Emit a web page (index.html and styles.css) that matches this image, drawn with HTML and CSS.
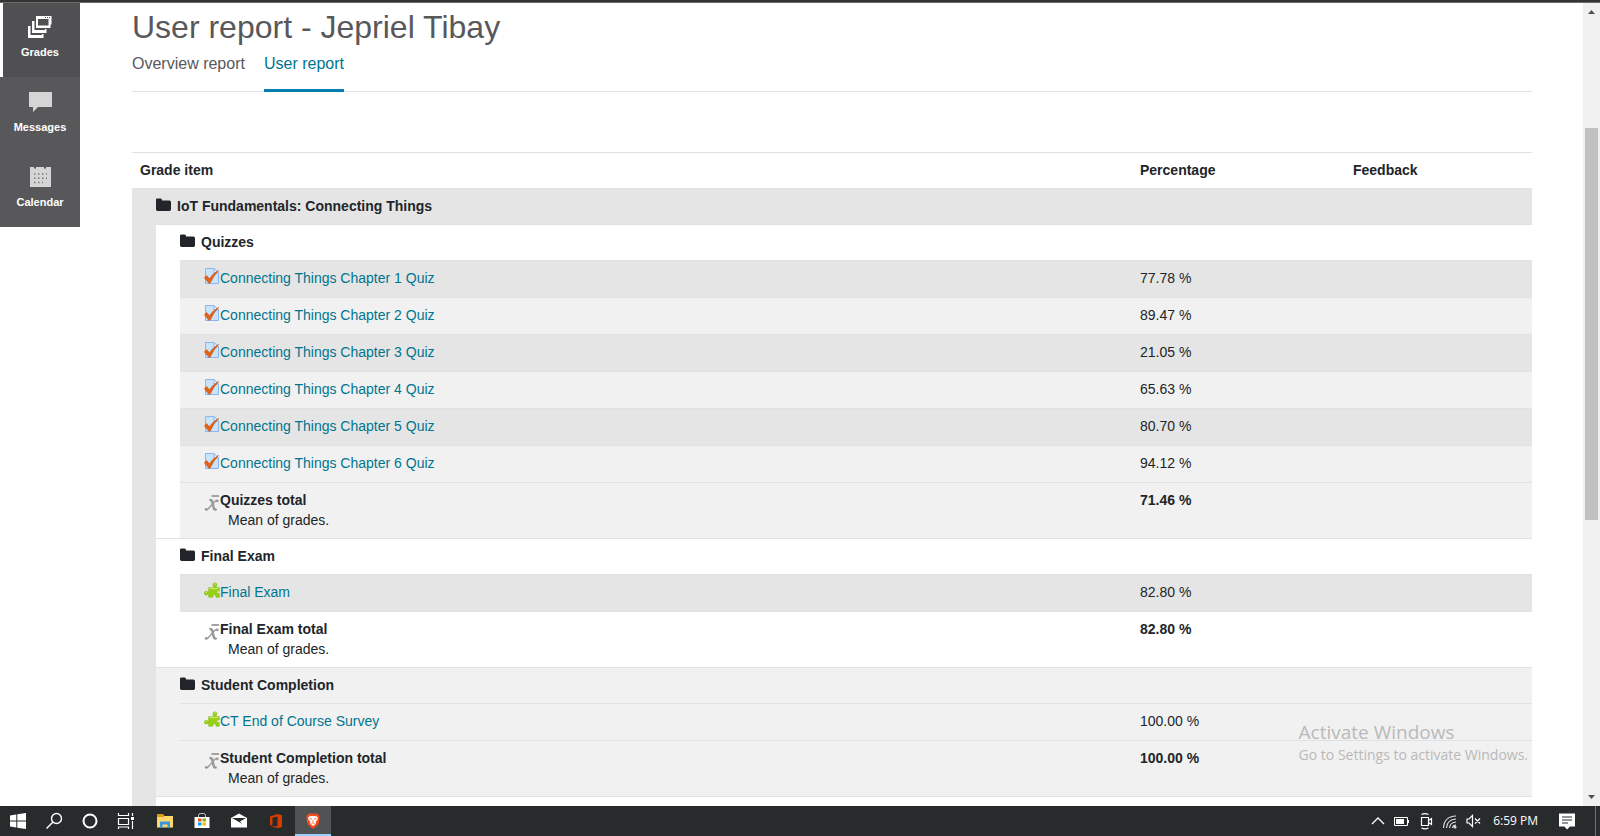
FILE: index.html
```html
<!DOCTYPE html>
<html lang="en">
<head>
<meta charset="utf-8">
<title>User report</title>
<link rel="stylesheet" href="styles.css">
</head>
<body>
<svg class="defs" aria-hidden="true">
  <symbol id="folder" viewBox="0 0 15 14"><path fill="#212529" d="M0 1.6Q0 .5 1.3.5H4.6Q6 .5 6 2V2.4H13.4Q15 2.4 15 3.9V11.6Q15 13 13.4 13H1.5Q0 13 0 11.6Z"/></symbol>
  <symbol id="quiz" viewBox="0 0 16 16"><path fill="#c8e4fb" stroke="#8fb6ec" d="M1.500.5H10L14.500 5V15.500H1.500Z"/><path fill="#f3f9ff" stroke="#8fb6ec" d="M10 .5V5H14.500Z"/><path fill="#e2641c" stroke="#c9500f" stroke-width=".6" d="M.4 9.800 2.600 7.600 5.500 10.700Q9 5 14.600 2.400 9.600 7.500 6 15.300H4.900Z"/></symbol>
  <symbol id="puzzle" viewBox="0 0 17 16"><path fill="#98d012" stroke="#86bb1c" stroke-width=".7" d="M5 5.500H10.200Q10.600 4.400 9.600 3.300 9 .5 11.500.4 14.100.5 13.500 3.300 12.600 4.500 13 5.500H16.200V9Q13.600 8.600 13.400 10.300 13.600 12 16.200 11.600V15.600H12.800Q13 13 11 12.800 9 13 9.400 15.600H5V12.800Q4 12.300 2.900 13.300.4 13.600.3 11.300.5 9 2.900 9.500 4.100 10.300 5 9.800Z"/><path stroke="#d6ef7b" d="M6 6.500H15M10.500 1.600H12.500M1.500 10.500H3"/></symbol>
  <symbol id="mean" viewBox="0 0 16 18"><path fill="none" stroke="#999" stroke-width="1.800" d="M7.500 2H15"/><path fill="none" stroke="#999" stroke-width="2.500" d="M5.500 6.200Q7.900 5.600 8.500 8.500L9.600 13.500Q10.200 16.400 12.600 15"/><path fill="none" stroke="#999" stroke-width="1.300" d="M13.500 7Q12.600 5.600 11 7.200L4.500 14.500Q2.600 16.800 1.400 15"/><circle cx="13.300" cy="6.900" r="1.300" fill="#999"/><circle cx="2.200" cy="15.300" r="1.400" fill="#999"/></symbol>
</svg>
<div class="screen">
  <div class="topline"></div>
  <div class="viewport">
    <nav class="sidebar">
      <a href="#" class="side-item side-item-active">
        <svg width="24" height="22" viewBox="0 0 24 22"><path fill="#fff" fill-rule="evenodd" d="M8 0H23.500V8.500H22.500V12H8ZM10 3V9.500H20.500V3Z"/><path fill="#fff" d="M4 5H6.500V14H18.500V17H4ZM0 10H2.500V19H15.500V22H0ZM17 13H18.500V16H17ZM14 18H15.500V20H14Z"/><path stroke="#505053" stroke-dasharray="1 1" d="M17 1.500H22"/></svg>
        <span>Grades</span></a>
      <a href="#" class="side-item">
        <svg width="24" height="22" viewBox="0 0 24 22"><path fill="#d5d5d5" d="M1 1H24V16H10L5 21V16H1Z"/></svg>
        <span>Messages</span></a>
      <a href="#" class="side-item">
        <svg width="24" height="22" viewBox="0 0 24 22"><path fill="#d5d5d5" d="M2 1H6V2.500H8V1H16V2.500H18V1H23V21H2Z"/><path stroke="#77777a" stroke-width="1.500" stroke-dasharray="1.500 2.500" d="M6 8H19M6 12.300H19M6 16.600H15"/></svg>
        <span>Calendar</span></a>
    </nav>
    <main class="content">
      <h1>User report - Jepriel Tibay</h1>
      <nav class="tabs">
        <a href="#" class="tab">Overview report</a>
        <a href="#" class="tab tab-active">User report</a>
      </nav>
      <table class="grades">
        <colgroup><col class="col-indent"><col class="col-indent"><col><col class="col-percent"><col class="col-feedback"></colgroup>
        <thead>
          <tr class="heading"><th colspan="3" scope="col">Grade item</th><th scope="col">Percentage</th><th scope="col">Feedback</th></tr>
        </thead>
        <tbody>
          <tr class="heading shade-dark"><th colspan="5" class="level"><svg class="folder"><use href="#folder"/></svg>IoT Fundamentals: Connecting Things</th></tr>
          <tr class="heading"><td rowspan="14" class="indent shade-dark"></td><th colspan="4" class="level"><svg class="folder"><use href="#folder"/></svg>Quizzes</th></tr>
          <tr class="shade-dark"><td rowspan="7" class="indent shade-white"></td><td class="level"><svg class="mod"><use href="#quiz"/></svg><a href="#">Connecting Things Chapter 1 Quiz</a></td><td>77.78 %</td><td></td></tr>
          <tr class="shade-light"><td class="level"><svg class="mod"><use href="#quiz"/></svg><a href="#">Connecting Things Chapter 2 Quiz</a></td><td>89.47 %</td><td></td></tr>
          <tr class="shade-dark"><td class="level"><svg class="mod"><use href="#quiz"/></svg><a href="#">Connecting Things Chapter 3 Quiz</a></td><td>21.05 %</td><td></td></tr>
          <tr class="shade-light"><td class="level"><svg class="mod"><use href="#quiz"/></svg><a href="#">Connecting Things Chapter 4 Quiz</a></td><td>65.63 %</td><td></td></tr>
          <tr class="shade-dark"><td class="level"><svg class="mod"><use href="#quiz"/></svg><a href="#">Connecting Things Chapter 5 Quiz</a></td><td>80.70 %</td><td></td></tr>
          <tr class="shade-light"><td class="level"><svg class="mod"><use href="#quiz"/></svg><a href="#">Connecting Things Chapter 6 Quiz</a></td><td>94.12 %</td><td></td></tr>
          <tr class="total shade-light"><td class="level"><svg class="mean"><use href="#mean"/></svg><b>Quizzes total</b><div class="note">Mean of grades.</div></td><td><b>71.46 %</b></td><td></td></tr>
          <tr class="heading"><th colspan="4" class="level"><svg class="folder"><use href="#folder"/></svg>Final Exam</th></tr>
          <tr class="shade-dark"><td rowspan="2" class="indent shade-white"></td><td class="level"><svg class="mod"><use href="#puzzle"/></svg><a href="#">Final Exam</a></td><td>82.80 %</td><td></td></tr>
          <tr class="total"><td class="level"><svg class="mean"><use href="#mean"/></svg><b>Final Exam total</b><div class="note">Mean of grades.</div></td><td><b>82.80 %</b></td><td></td></tr>
          <tr class="heading shade-light"><th colspan="4" class="level"><svg class="folder"><use href="#folder"/></svg>Student Completion</th></tr>
          <tr class="shade-light"><td rowspan="2" class="indent shade-light"></td><td class="level"><svg class="mod"><use href="#puzzle"/></svg><a href="#">CT End of Course Survey</a></td><td>100.00 %</td><td></td></tr>
          <tr class="total shade-light"><td class="level"><svg class="mean"><use href="#mean"/></svg><b>Student Completion total</b><div class="note">Mean of grades.</div></td><td><b>100.00 %</b></td><td></td></tr>
          <tr class="filler"><td class="indent shade-dark"></td><td colspan="4"></td></tr>
        </tbody>
      </table>
    </main>
    <div class="scrollbar">
      <svg width="17" height="17" viewBox="0 0 17 17"><path fill="#505050" d="M8.500 7 12 11H5Z"/></svg>
      <div class="track"><div class="thumb"></div></div>
      <svg width="17" height="17" viewBox="0 0 17 17"><path fill="#505050" d="M5 6H12L8.500 10Z"/></svg>
    </div>
    <div class="watermark"><div class="watermark-title">Activate Windows</div><div class="watermark-text">Go to Settings to activate Windows.</div></div>
  </div>
  <footer class="taskbar">
    <div class="system">
      <button aria-label="Start"><svg viewBox="0 0 18 18"><path fill="#fff" d="M1 3.500 7.300 2.500V8.500H1ZM8.300 2.300 17 1V8.500H8.300ZM1 9.500H7.300V15.500L1 14.500ZM8.300 9.500H17V17L8.300 15.700Z"/></svg></button>
      <button aria-label="Search"><svg viewBox="0 0 18 18" fill="none" stroke="#fff" stroke-width="1.400"><circle cx="11.500" cy="6.500" r="5"/><path d="M8 10 1.500 16.500"/></svg></button>
      <button aria-label="Cortana"><svg viewBox="0 0 18 18"><circle cx="9" cy="9" r="6.500" fill="none" stroke="#fff" stroke-width="2"/></svg></button>
      <button aria-label="Task view"><svg viewBox="0 0 18 18" fill="none" stroke="#fff" stroke-width="1.200"><path d="M1.500 1V3.500H11.500V1M1.500 6.500H11.500V12.500H1.500ZM1.500 17V15H11.500V17M15.500 1V4M15.500 9V17"/><path fill="#fff" stroke="none" d="M14 5H17V8H14Z"/></svg></button>
    </div>
    <div class="apps">
      <button aria-label="File Explorer"><svg viewBox="0 0 18 18"><path fill="#dc9a0c" d="M1 2H7L8.500 4H15V7H1Z"/><path fill="#ffd66b" d="M1 5H7L8.500 4H17V15.500H1Z"/><path fill="#3897e0" d="M4 9.500H14V16H11.500V12.500H6.500V16H4Z"/></svg></button>
      <button aria-label="Store"><svg viewBox="0 0 18 18"><path fill="none" stroke="#ccc" d="M5.500 5V3.500Q5.500 1.500 7.500 1.500H10.500Q12.500 1.500 12.500 3.500V5"/><path fill="#fff" d="M1.500 5H16.500V16H1.500Z"/><path fill="#f04e1f" d="M5 6.500H8.500V9.500H5Z"/><path fill="#7db900" d="M9.500 6.500H13V9.500H9.500Z"/><path fill="#00a2ed" d="M5 10.500H8.500V13.500H5Z"/><path fill="#fcb700" d="M9.500 10.500H13V13.500H9.500Z"/></svg></button>
      <button aria-label="Mail"><svg viewBox="0 0 18 18"><path fill="#fff" d="M1 6 9 1.500 17 6V15.500H1Z"/><path fill="#282b2c" d="M2 6H16L10 9.500 12.500 12Z"/></svg></button>
      <button aria-label="Office"><svg viewBox="0 0 18 18"><path fill="#d83b01" fill-rule="evenodd" d="M3 4.500 10.500 2 15 3.200V15L10.500 16.200 3 13.800 10.500 14.500V4.500L5.500 5.800V12.500L3 13.800Z"/></svg></button>
      <button aria-label="Brave" class="running"><svg viewBox="0 0 18 18"><path fill="#fb4a1c" d="M5 1.500H13L15.500 4 15 10Q14.500 13 9 16.800 3.500 13 3 10L2.500 4Z"/><path fill="#fff" d="M5 4.500 9 3.800 13 4.500 14 6.500 11.500 10.500 12 11.500 9 14 6 11.500 6.500 10.500 4 6.500Z"/><path fill="none" stroke="#fb4a1c" stroke-width=".8" d="M5.500 6.500 8 7.200M12.500 6.500 10 7.200M9 8V10M7.500 11.500 9 10.800 10.500 11.500"/></svg></button>
    </div>
    <div class="tray">
      <svg viewBox="0 0 18 18" fill="none" stroke="#fff" stroke-width="1.300"><path d="M3 12 9 6 15 12"/></svg>
      <svg viewBox="0 0 18 18"><path fill="none" stroke="#fff" d="M1.500 5.500H14.500V13.500H1.500ZM15.500 8V11"/><path fill="#fff" d="M3 7H11V12H3Z"/></svg>
      <svg viewBox="0 0 18 18" fill="none" stroke="#fff" stroke-width="1.200"><path d="M4.500 5.500H11.500V13.500H4.500ZM11.500 8.500 14.500 6.500V12.500L11.500 10.500M4.500 2.500Q8 .6 11.500 2.500M4.500 16Q8 17.800 11.500 16"/></svg>
      <svg viewBox="0 0 18 18" fill="none" stroke="#ddd" stroke-width="1.100"><path d="M2.500 16Q3 4.500 15 4M5.500 16Q6 7.500 15 7M8.500 16Q9 10.500 15 10M11.500 16Q12 13 15 13"/><circle cx="14" cy="15" r="1" fill="#fff"/></svg>
      <svg viewBox="0 0 18 18" fill="none" stroke="#fff" stroke-width="1.200"><path d="M2 7H4L7.500 3.500V14.500L4 11H2ZM10 6.500 15 11.500M15 6.500 10 11.500"/></svg>
      <time>6:59 PM</time>
      <svg viewBox="0 0 18 18"><path fill="#fff" d="M1 1.500H17V14.500H12L9 17.500 6.500 14.500H1Z"/><path stroke="#282b2c" d="M4 5H14M4 8H14M4 11H10"/></svg>
    </div>
  </footer>
</div>
</body>
</html>
```
FILE: styles.css
```css
* { box-sizing: border-box; }
body {
  margin: 0;
  background: #fff;
  color: #212529;
  font: 14px/20px "Liberation Sans", Arial, sans-serif;
}
a { color: #00758f; text-decoration: none; }
.defs { position: absolute; width: 0; height: 0; }
.screen { display: flex; flex-direction: column; height: 100vh; overflow: hidden; }
.topline { flex: none; height: 3px; background: #353434; border-bottom: 1px solid #6a6a6a; }
.viewport { position: relative; flex: 1; min-height: 0; display: flex; overflow: hidden; }

.sidebar { width: 80px; flex: none; }
.side-item {
  display: flex;
  flex-direction: column;
  align-items: center;
  gap: 7px;
  height: 75px;
  padding-top: 14px;
  background: #58585b;
  color: #fff;
  font-size: 11px;
  font-weight: bold;
  line-height: 14px;
}
.side-item-active { height: 74px; padding-top: 13px; padding-right: 3px; background: #505053; border-left: 3px solid #fff; }

.content { flex: 1; min-width: 0; padding: 4px 51px 0 52px; }
h1 { margin: 0; font-size: 32px; line-height: 40px; font-weight: normal; color: #58585b; }
.tabs { display: flex; gap: 19px; height: 45px; border-bottom: 1px solid #dee2e6; font-size: 16px; }
.tab { height: 45px; padding-top: 7px; color: #58585b; }
.tab-active { color: #00758f; border-bottom: 3px solid #047fae; }

.grades { width: 100%; margin-top: 60px; table-layout: fixed; border-spacing: 0; }
.col-indent { width: 24px; }
.col-percent { width: 213px; }
.col-feedback { width: 187px; }
.grades th, .grades td {
  padding: 7px 8px 9px;
  border-top: 1px solid #dee2e6;
  text-align: left;
  vertical-align: top;
}
.grades .heading th, .grades .total td { padding-bottom: 8px; }
.grades .level { padding-left: 24px; }
.grades .indent { padding: 0; border-top: 0; }
.shade-dark { background: #e5e5e5; }
.shade-light { background: #f1f1f1; }
.shade-white { background: #fff; }
.grades svg { display: inline-block; }
.folder { width: 15px; height: 14px; margin-right: 6px; vertical-align: -1px; }
.mod { width: 16px; height: 16px; vertical-align: 0; margin: -3px 0 -1px; }
.mean { width: 16px; height: 18px; vertical-align: -4px; margin: -3px 0; }
.note { padding-left: 24px; }
.filler td { height: 36px; }

.scrollbar { flex: none; width: 17px; display: flex; flex-direction: column; background: #f0f0f0; }
.scrollbar svg { flex: none; display: block; }
.track { flex: 1; padding: 0 2px; display: grid; grid-template-rows: 14% 51% 1fr; }
.thumb { grid-row: 2; background: #c1c1c1; }

.watermark { position: absolute; right: 72px; bottom: 41px; color: #b9b9b9; font-family: "Open Sans", sans-serif; }
.watermark-title { font-size: 19px; line-height: 26px; }
.watermark-text { font-size: 14px; line-height: 20px; }

.taskbar { flex: none; height: 30px; display: flex; background: #282b2c; color: #fff; }
.taskbar svg { width: 18px; height: 18px; display: block; }
.taskbar button { width: 36px; height: 30px; padding: 0 9px; border: 0; background: none; }
.taskbar .running { background: #505354; border-bottom: 2px solid #9cd0ff; padding-top: 2px; }
.system { display: flex; }
.apps { display: flex; gap: 1px; margin-left: 3px; }
.tray { display: flex; align-items: center; gap: 6px; margin-left: auto; margin-right: 4px; padding-right: 19px; border-right: 1px solid #707273; }
.tray time { margin: 0 14px 0 4px; font: 12px/18px "Open Sans", sans-serif; }
```
